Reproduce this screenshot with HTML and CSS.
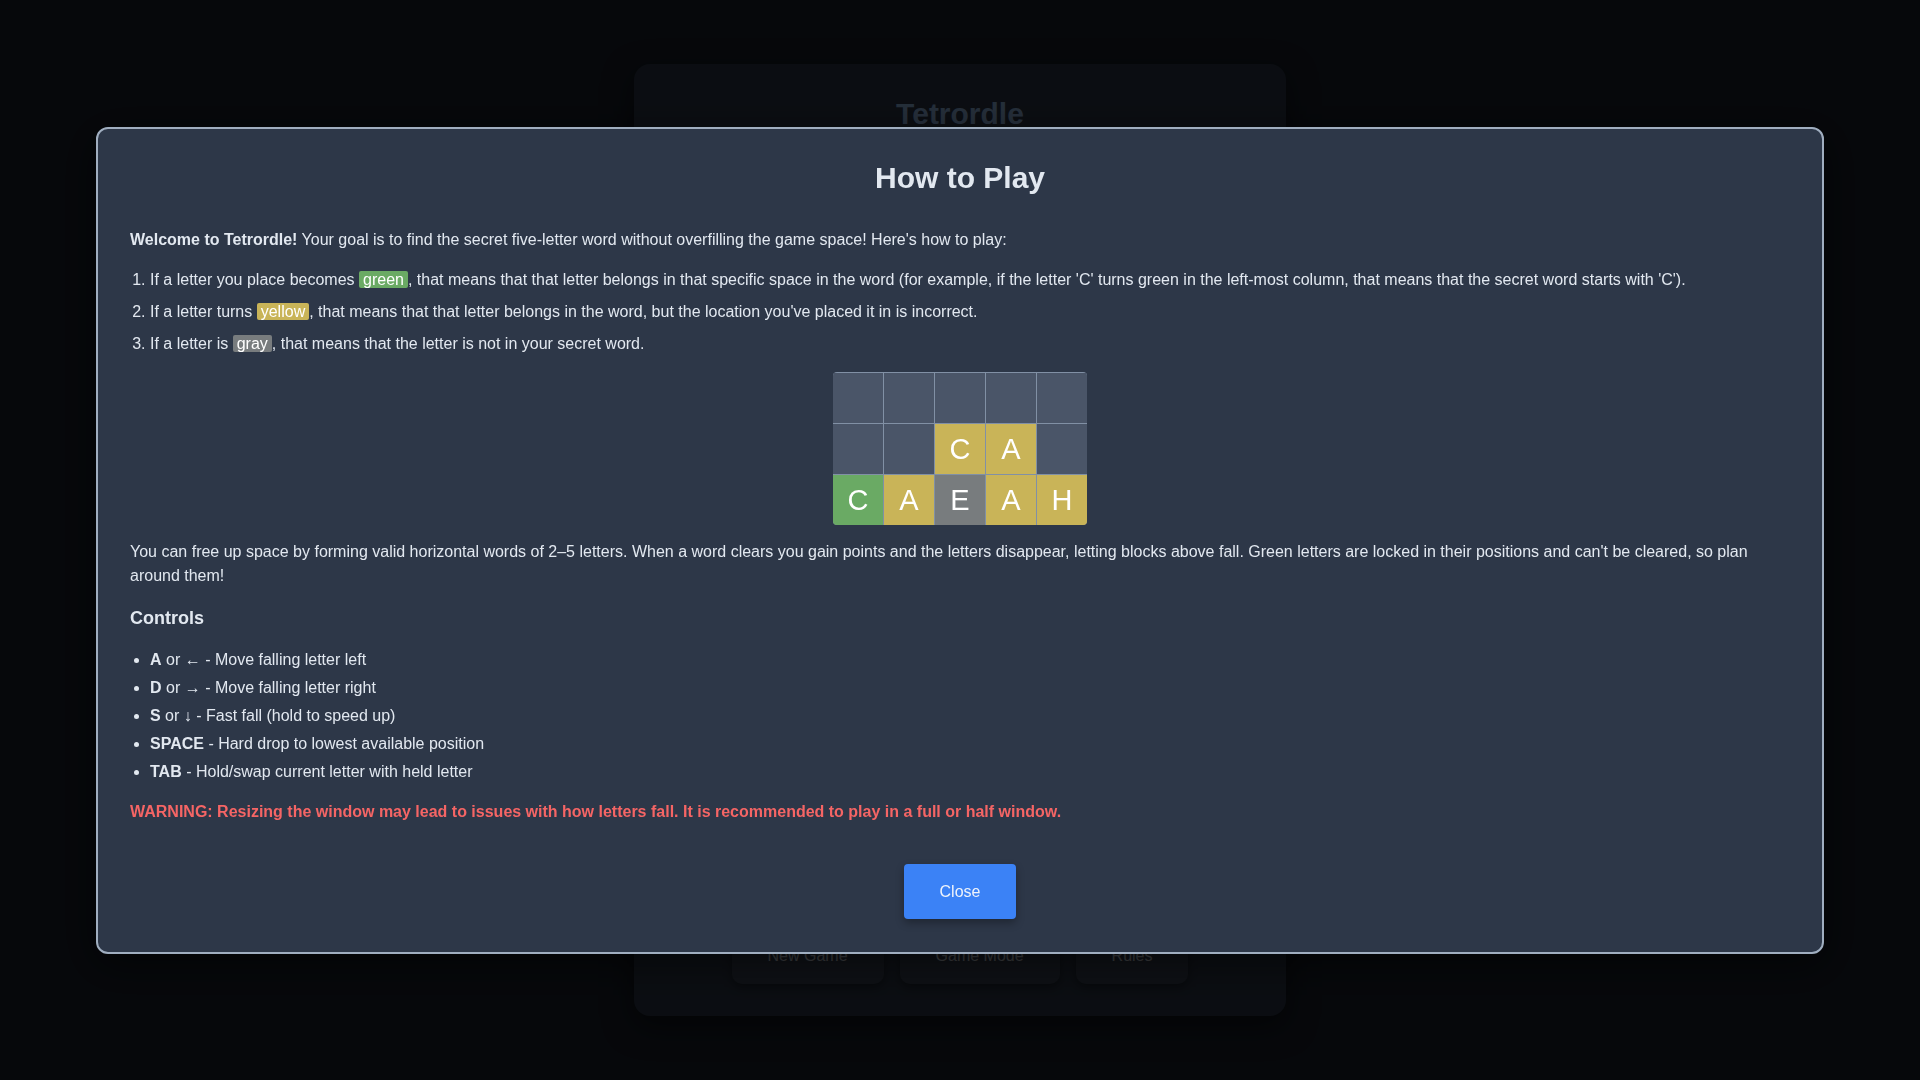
FILE: index.html
```html
<!DOCTYPE html>
<html lang="en">
<head>
<meta charset="utf-8">
<title>Tetrordle</title>
<link rel="stylesheet" href="styles.css">
</head>
<body>
<main class="game-card">
  <h1 class="game-title">Tetrordle</h1>
  <div class="board-area"></div>
  <div class="menu-row">
    <button class="menu-btn">New Game</button>
    <button class="menu-btn">Game Mode</button>
    <button class="menu-btn">Rules</button>
  </div>
</main>

<div class="overlay">
  <section class="modal">
    <h2 class="modal-title">How to Play</h2>
    <p class="intro"><strong>Welcome to Tetrordle!</strong> Your goal is to find the secret five-letter word without overfilling the game space! Here's how to play:</p>
    <ol class="rules">
      <li>If a letter you place becomes <span class="tag tag-green">green</span>, that means that that letter belongs in that specific space in the word (for example, if the letter 'C' turns green in the left-most column, that means that the secret word starts with 'C').</li>
      <li>If a letter turns <span class="tag tag-yellow">yellow</span>, that means that that letter belongs in the word, but the location you've placed it in is incorrect.</li>
      <li>If a letter is <span class="tag tag-gray">gray</span>, that means that the letter is not in your secret word.</li>
    </ol>
    <div class="example-grid">
      <div class="cell"></div><div class="cell"></div><div class="cell"></div><div class="cell"></div><div class="cell"></div>
      <div class="cell"></div><div class="cell"></div><div class="cell yellow">C</div><div class="cell yellow">A</div><div class="cell"></div>
      <div class="cell green">C</div><div class="cell yellow">A</div><div class="cell gray">E</div><div class="cell yellow">A</div><div class="cell yellow">H</div>
    </div>
    <p class="explain">You can free up space by forming valid horizontal words of 2–5 letters. When a word clears you gain points and the letters disappear, letting blocks above fall. Green letters are locked in their positions and can't be cleared, so plan around them!</p>
    <h3 class="controls-title">Controls</h3>
    <ul class="controls">
      <li><strong>A</strong> or ← - Move falling letter left</li>
      <li><strong>D</strong> or → - Move falling letter right</li>
      <li><strong>S</strong> or ↓ - Fast fall (hold to speed up)</li>
      <li><strong>SPACE</strong> - Hard drop to lowest available position</li>
      <li><strong>TAB</strong> - Hold/swap current letter with held letter</li>
    </ul>
    <p class="warning">WARNING: Resizing the window may lead to issues with how letters fall. It is recommended to play in a full or half window.</p>
    <div class="modal-actions">
      <button class="close-btn">Close</button>
    </div>
  </section>
</div>
</body>
</html>
```

FILE: styles.css
```css
* {
  box-sizing: border-box;
}

html, body {
  height: 100%;
}

body {
  margin: 0;
  background: #1a202c;
  font-family: "Liberation Sans", Arial, sans-serif;
  color: #e2e8f0;
  display: flex;
  align-items: center;
  justify-content: center;
}

/* Background game card */
.game-card {
  width: 652px;
  height: 952px;
  background: #2d3748;
  border-radius: 16px;
  padding: 32px;
  display: flex;
  flex-direction: column;
  align-items: center;
  box-shadow: 0 10px 30px rgba(0, 0, 0, 0.5);
}

.game-title {
  margin: 0;
  font-size: 30px;
  line-height: 36px;
  font-weight: 700;
  color: #93b8e6;
}

.board-area {
  flex: 1;
}

.menu-row {
  display: flex;
  gap: 16px;
}

.menu-btn {
  font-family: inherit;
  font-size: 16px;
  line-height: 19px;
  padding: 19px 36px;
  border: none;
  border-radius: 10px;
  background: #3a4354;
  color: #e2e8f0;
  box-shadow: 0 4px 8px rgba(0, 0, 0, 0.35);
}

/* Overlay + modal */
.overlay {
  position: fixed;
  inset: 0;
  background: rgba(0, 0, 0, 0.75);
  display: flex;
  align-items: center;
  justify-content: center;
}

.modal {
  width: 90%;
  background: #2d3748;
  border: 2px solid #a0aec0;
  border-radius: 12px;
  padding: 32px 32px 33px;
  font-size: 16px;
  line-height: 24px;
  box-shadow: 0 10px 40px rgba(0, 0, 0, 0.5);
}

.modal-title {
  margin: 0 0 33px;
  text-align: center;
  font-size: 30px;
  line-height: 34px;
  font-weight: 700;
  color: #e2e8f0;
}

.intro {
  margin: 0 0 16px;
}

.rules {
  margin: 0;
  padding-left: 20px;
}

.rules li + li {
  margin-top: 8px;
}

.tag {
  padding: 0 4px;
  border-radius: 2px;
  color: #ffffff;
}

.tag-green { background: #6aaa64; }
.tag-yellow { background: #c9b458; }
.tag-gray { background: #787c7e; }

.example-grid {
  width: 254px;
  margin: 16px auto 15px;
  display: grid;
  grid-template-columns: repeat(5, 50px);
  grid-auto-rows: 50px;
  gap: 1px;
  padding-top: 1px;
  background: #8190a5;
  border-radius: 4px;
  overflow: hidden;
}

.cell {
  background: #4a5568;
  color: #ffffff;
  font-size: 29px;
  display: flex;
  align-items: center;
  justify-content: center;
}

.cell.yellow { background: #c9b458; }
.cell.green { background: #6aaa64; }
.cell.gray { background: #787c7e; }

.explain {
  margin: 0;
}

.controls-title {
  margin: 17px 0 16px;
  font-size: 18px;
  line-height: 27px;
  font-weight: 700;
}

.controls {
  margin: 0;
  padding-left: 20px;
}

.controls li + li {
  margin-top: 4px;
}

.warning {
  margin: 16px 0 0;
  color: #f56565;
  font-weight: 700;
}

.modal-actions {
  margin-top: 40px;
  display: flex;
  justify-content: center;
}

.close-btn {
  font-family: inherit;
  font-size: 16px;
  line-height: 19px;
  padding: 18px 36px;
  border: none;
  border-radius: 4px;
  background: #3b82f6;
  color: #eef3fb;
  box-shadow: 0 4px 8px rgba(0, 0, 0, 0.3);
}
```
